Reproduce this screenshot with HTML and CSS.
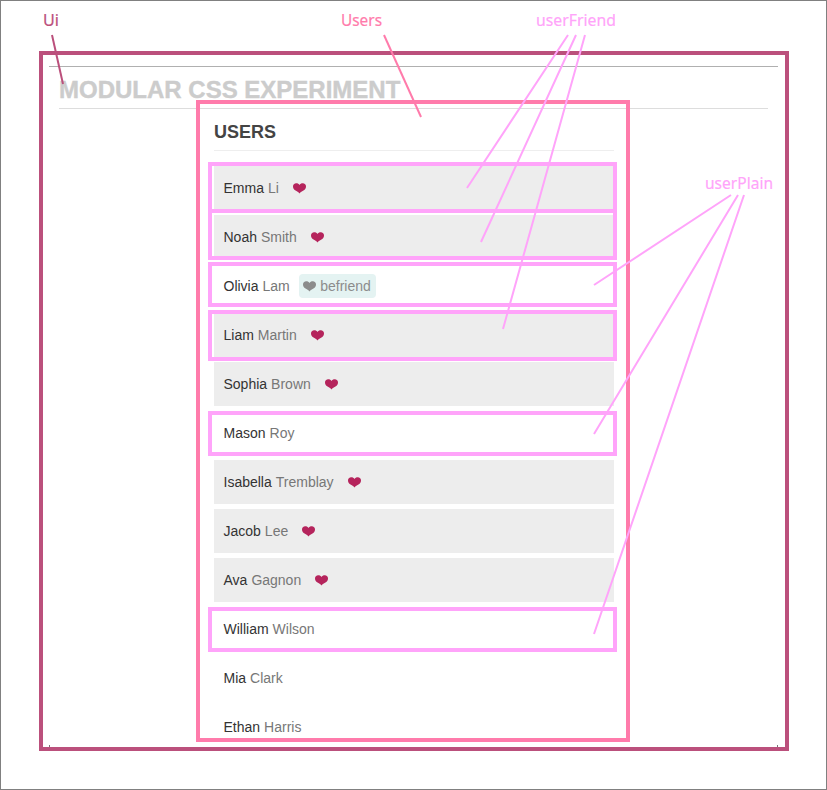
FILE: index.html
```html
<!DOCTYPE html>
<html lang="en">
<head>
<meta charset="utf-8">
<title>Modular CSS Experiment</title>
<link rel="stylesheet" href="styles.css">
</head>
<body>
<main class="ui">
  <h1 class="title"><span>MODULAR CSS EXPERIMENT</span></h1>
  <section class="users">
    <h2 class="heading"><span>USERS</span></h2>
    <ul class="list">
      <li class="user friend"><b>Emma</b> Li <svg class="heart" viewBox="0 0 13 11"><use href="#heart"/></svg></li>
      <li class="user friend"><b>Noah</b> Smith <svg class="heart" viewBox="0 0 13 11"><use href="#heart"/></svg></li>
      <li class="user"><b>Olivia</b> Lam <button class="befriend"><svg class="heart" viewBox="0 0 13 11"><use href="#heart"/></svg>befriend</button></li>
      <li class="user friend"><b>Liam</b> Martin <svg class="heart" viewBox="0 0 13 11"><use href="#heart"/></svg></li>
      <li class="user friend"><b>Sophia</b> Brown <svg class="heart" viewBox="0 0 13 11"><use href="#heart"/></svg></li>
      <li class="user"><b>Mason</b> Roy</li>
      <li class="user friend"><b>Isabella</b> Tremblay <svg class="heart" viewBox="0 0 13 11"><use href="#heart"/></svg></li>
      <li class="user friend"><b>Jacob</b> Lee <svg class="heart" viewBox="0 0 13 11"><use href="#heart"/></svg></li>
      <li class="user friend"><b>Ava</b> Gagnon <svg class="heart" viewBox="0 0 13 11"><use href="#heart"/></svg></li>
      <li class="user"><b>William</b> Wilson</li>
      <li class="user"><b>Mia</b> Clark</li>
      <li class="user"><b>Ethan</b> Harris</li>
    </ul>
  </section>
</main>
<svg class="notes" width="827" height="790" viewBox="0 0 827 790">
  <defs><path id="heart" d="M6.500 10.400C5.700 8.900 3.800 8.600 2.100 7.300C.6 6.100 0 4.900 0 3.400C0 1.600 1.400.3 3.200.3C4.700.3 5.900.9 6.500 1.900C7.100.9 8.300.3 9.800.3C11.600.3 13 1.600 13 3.400C13 4.900 12.400 6.100 10.900 7.300C9.200 8.600 7.300 8.900 6.500 10.400Z"/></defs>
  <g class="c-ui">
    <rect x="41" y="53" width="746" height="696"/>
    <path class="thin" d="M52 35L63 84"/>
    <text x="43" y="26" textLength="16" lengthAdjust="spacingAndGlyphs">Ui</text>
  </g>
  <g class="c-users">
    <rect x="198" y="102" width="430" height="638"/>
    <path class="thin" d="M384 35L421 117"/>
    <text x="341" y="26" textLength="41" lengthAdjust="spacingAndGlyphs">Users</text>
  </g>
  <g class="c-user">
    <rect x="210" y="164" width="405" height="47"/>
    <rect x="210" y="211" width="405" height="47"/>
    <rect x="210" y="264" width="405" height="41"/>
    <rect x="210" y="312" width="405" height="47"/>
    <rect x="210" y="413" width="405" height="41"/>
    <rect x="210" y="609" width="405" height="41"/>
    <path class="thin" d="M568 35L467 188M576 35L481 242M585 35L503 329M731 195L594 285M738 195L594 434M744 195L594 634"/>
    <text x="536" y="26" textLength="80" lengthAdjust="spacingAndGlyphs">userFriend</text>
    <text x="705" y="189" textLength="68" lengthAdjust="spacingAndGlyphs">userPlain</text>
  </g>
  <path class="tick" d="M49.500 745v2M777.500 745v2"/>
</svg>
</body>
</html>
```

FILE: styles.css
```css
* { box-sizing: border-box; }
body {
  margin: 0;
  height: 790px;
  overflow: hidden;
  position: relative;
  border: 1px solid #808080;
  background: #fff;
  font-family: "Liberation Sans", Arial, sans-serif;
}
.ui {
  margin: 65px 48px 0;
  height: 680px;
  padding: 0 10px;
  border-top: 1px solid #b0b0b0;
}
.title {
  margin: 0;
  height: 42px;
  padding-top: 9px;
  border-bottom: 1px solid #ddd;
  color: #ccc;
  font-size: 24px;
  line-height: 28px;
  -webkit-text-stroke: 0.4px #ccc;
}
.users { width: 400px; margin: 0 0 0 155px; }
.heading {
  margin: 0;
  height: 42px;
  padding-top: 12px;
  border-bottom: 1px solid #eee;
  color: #444;
  font-size: 18px;
  line-height: 22px;
}
.list {
  list-style: none;
  margin: 15px 0 0;
  padding: 0;
  display: grid;
  gap: 5px;
}
.user {
  height: 44px;
  padding-left: 9.5px;
  display: flex;
  align-items: center;
  gap: 4px;
  color: #777;
  font-size: 14px;
}
.user b { color: #333; font-weight: 400; }
.friend { background: #ededed; }
.heart { width: 13px; height: 11px; fill: #b5245c; }
.friend .heart { margin-left: 10px; }
.befriend {
  height: 24px;
  margin-left: 5px;
  padding: 0 5.5px 0 4.500px;
  display: flex;
  align-items: center;
  gap: 4px;
  border: 0;
  border-radius: 4px;
  background: #e4f3f2;
  color: #8c8c8c;
  font: inherit;
}
.befriend .heart { fill: #8c8c8c; }
.notes { position: absolute; left: -1px; top: -1px; fill: none; stroke-width: 4; }
.notes .thin { stroke-width: 2; }
.notes text { stroke-width: 0.2px; font: 17px "Noto Sans", sans-serif; }
.c-ui { stroke: #bb507c; }
.c-ui text { fill: #bb507c; }
.c-users { stroke: #ff7bab; }
.c-users text { fill: #ff7bab; }
.c-user { stroke: #ffa4fa; }
.c-user text { fill: #ffa4fa; }
.tick { stroke: #777; stroke-width: 1; }
```
